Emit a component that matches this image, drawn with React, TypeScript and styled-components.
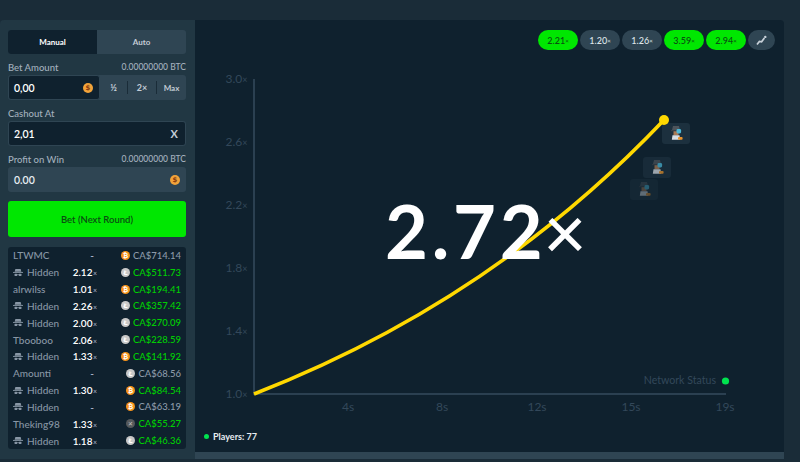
import React from "react";
import styled, { createGlobalStyle } from "styled-components";

const Global = createGlobalStyle`
  html, body { margin: 0; padding: 0; background: #1a2c38; }
  body { font-family: "Lato", "Noto Sans", sans-serif; overflow: hidden; }
  * { box-sizing: border-box; }
`;

const Page = styled.div`
  width: 800px;
  height: 462px;
  padding-top: 20px;
  background: #1a2c38;
`;
const Frame = styled.div`
  width: 784px;
  height: 439px;
  display: flex;
  border-radius: 4px 4px 0 0;
  overflow: hidden;
`;
const Sidebar = styled.aside`
  width: 195px;
  flex: none;
  background: #213743;
  padding: 10px 9px 0 8px;
  display: flex;
  flex-direction: column;
`;
const Tabs = styled.div`
  display: flex;
  height: 24px;
  background: #2f4553;
  border-radius: 3px;
  overflow: hidden;
`;
const Tab = styled.div<{ $active?: boolean }>`
  flex: 1;
  display: flex;
  align-items: center;
  justify-content: center;
  font-size: 8px;
  font-weight: 700;
  color: ${(p) => (p.$active ? "#ffffff" : "#c3ccd6")};
  background: ${(p) => (p.$active ? "#0f212e" : "transparent")};
`;
const LabelRow = styled.div<{ $top: number }>`
  display: flex;
  justify-content: space-between;
  align-items: center;
  height: 12px;
  margin-top: ${(p) => p.$top}px;
  margin-bottom: 2px;
  font-size: 9.5px;
  font-weight: 500;
  color: #a3b0bd;
`;
const Balance = styled.span`
  font-size: 8.5px;
`;
const Combo = styled.div`
  display: flex;
  height: 25px;
  background: #2f4553;
  border-radius: 3px;
  overflow: hidden;
`;
const Field = styled.div<{ $grow?: boolean }>`
  ${(p) => (p.$grow ? "flex: 1;" : "width: 92px;")}
  height: 100%;
  display: flex;
  align-items: center;
  justify-content: space-between;
  padding: 0 6px 0 5px;
  background: #0f212e;
  border: 1px solid #2f4553;
  border-radius: 3px;
  font-size: 10.5px;
  font-weight: 600;
  color: #ffffff;
`;
const Quick = styled.div`
  flex: 1;
  display: flex;
  align-items: center;
  padding: 0;
`;
const QuickBtn = styled.div<{ $w: number; $sep?: boolean; $small?: boolean }>`
  width: ${(p) => p.$w}px;
  height: 13px;
  display: flex;
  align-items: center;
  justify-content: center;
  font-size: ${(p) => (p.$small ? 8 : 9)}px;
  font-weight: 700;
  color: #c3ccd6;
  ${(p) => (p.$sep ? "border-left: 1px solid #1a2c38;" : "")}
`;
const XMark = styled.span`
  font-size: 11px;
  font-weight: 700;
  color: #c3ccd6;
  margin-right: 1px;
`;
const ReadOnly = styled.div`
  height: 25px;
  display: flex;
  align-items: center;
  justify-content: space-between;
  padding: 0 6px;
  background: #2f4553;
  border-radius: 3px;
  font-size: 10.5px;
  font-weight: 600;
  color: #e8edf2;
`;
const BetButton = styled.div`
  height: 36px;
  margin-top: 9px;
  display: flex;
  align-items: center;
  justify-content: center;
  background: #00e701;
  border-radius: 3px;
  font-size: 9.5px;
  font-weight: 600;
  color: #0b4d12;
`;
const List = styled.div`
  height: 202px;
  margin-top: 10px;
  padding: 0 5px;
  display: grid;
  grid-auto-rows: 1fr;
  background: #0f212e;
  border-radius: 3px;
`;
const Row = styled.div`
  display: grid;
  grid-template-columns: 84px 1fr;
  align-items: center;
  font-size: 10px;
  font-weight: 500;
  color: #8896a5;
`;
const NameMult = styled.div`
  display: flex;
  align-items: center;
  justify-content: space-between;
`;
const Name = styled.span`
  display: flex;
  align-items: center;
  gap: 4px;
  font-size: 10px;
`;
const Mult = styled.span<{ $dash?: boolean }>`
  color: #ffffff;
  font-weight: 600;
  font-size: 10px;
  ${(p) => (p.$dash ? "margin-right: 3px; color:#b1bad3;" : "")}
`;
const Times = styled.span`
  font-size: 7px;
  font-weight: 400;
  color: #b1bad3;
  margin-left: 0.5px;
`;
const Amount = styled.div<{ $win?: boolean }>`
  display: flex;
  align-items: center;
  justify-content: flex-end;
  gap: 3px;
  font-size: 9.5px;
  color: ${(p) => (p.$win ? "#00cf02" : "#8c9aa9")};
`;
const Main = styled.main`
  flex: 1;
  display: flex;
  flex-direction: column;
  background: #0f212e;
`;
const History = styled.div`
  height: 40px;
  flex: none;
  padding: 10px 9px 0 0;
  display: flex;
  justify-content: flex-end;
  gap: 2px;
`;
const Pill = styled.div<{ $win?: boolean; $icon?: boolean }>`
  width: ${(p) => (p.$icon ? 27 : 40)}px;
  height: 20px;
  display: flex;
  align-items: center;
  justify-content: center;
  border-radius: 10px;
  font-size: 9px;
  font-weight: 500;
  background: ${(p) => (p.$win ? "#00e701" : "#2f4553")};
  color: ${(p) => (p.$win ? "#0b4d12" : "#dfe5ea")};
`;
const PillTimes = styled.span`
  font-size: 6px;
`;
const Chart = styled.div`
  flex: 1;
  position: relative;
`;
const ChartSvg = styled.svg`
  display: block;
  width: 588px;
  height: 365px;
`;
const Multiplier = styled.div`
  position: absolute;
  left: 190px;
  top: 128px;
  display: flex;
  align-items: baseline;
  font-size: 74px;
  line-height: 86px;
  font-weight: 700;
  letter-spacing: 3.8px;
  color: #ffffff;
`;
const MultX = styled.span`
  font-size: 74px;
  letter-spacing: 0;
  margin-left: -3px;
  font-weight: 500;
`;
const Footer = styled.div`
  height: 27px;
  flex: none;
  display: flex;
  align-items: center;
  gap: 4px;
  padding: 0 0 4px 9px;
  font-size: 9px;
  font-weight: 700;
  color: #e8edf2;
`;
const Dot = styled.span`
  width: 5px;
  height: 5px;
  border-radius: 50%;
  background: #00e34f;
`;
const BottomStrip = styled.div`
  height: 7px;
  margin-top: auto;
  background: #2f4553;
`;
const MainWrap = styled.div`
  flex: 1;
  display: flex;
  flex-direction: column;
`;

type CoinKind = "btc" | "ltc" | "xrp" | "usd";
const coinFill: Record<CoinKind, string> = { btc: "#f7931a", ltc: "#c8c8c8", xrp: "#55595c", usd: "#f2a33a" };
const coinMark: Record<CoinKind, string> = { btc: "₿", ltc: "Ł", xrp: "✕", usd: "$" };
const Coin = ({ kind, size = 9 }: { kind: CoinKind; size?: number }) => (
  <svg width={size} height={size} viewBox="0 0 10 10" style={{ flex: "none" }}>
    <circle cx="5" cy="5" r="5" fill={coinFill[kind]} />
    <text
      x="5"
      y="7.4"
      textAnchor="middle"
      fontSize="7"
      fontWeight="700"
      fontFamily="'DejaVu Sans', sans-serif"
      fill={kind === "usd" ? "#8a3d10" : kind === "xrp" ? "#bbbbbb" : "#ffffff"}
    >
      {coinMark[kind]}
    </text>
  </svg>
);

const Incognito = () => (
  <svg width="10" height="9" viewBox="0 0 11 9" style={{ flex: "none" }}>
    <path d="M2.6 0.6h5.8l0.8 3H1.8z" fill="#8896a5" />
    <rect x="0" y="3.9" width="11" height="1" fill="#8896a5" />
    <rect x="1.6" y="6" width="3.2" height="2.4" rx="0.8" fill="#8896a5" />
    <rect x="6.2" y="6" width="3.2" height="2.4" rx="0.8" fill="#8896a5" />
    <rect x="4.6" y="6.5" width="1.8" height="0.7" fill="#8896a5" />
  </svg>
);

const rows: { name: string; hidden?: boolean; mult: string; coin: CoinKind; amount: string; win: boolean }[] = [
  { name: "LTWMC", mult: "-", coin: "btc", amount: "CA$714.14", win: false },
  { name: "Hidden", hidden: true, mult: "2.12", coin: "ltc", amount: "CA$511.73", win: true },
  { name: "alrwilss", mult: "1.01", coin: "btc", amount: "CA$194.41", win: true },
  { name: "Hidden", hidden: true, mult: "2.26", coin: "ltc", amount: "CA$357.42", win: true },
  { name: "Hidden", hidden: true, mult: "2.00", coin: "ltc", amount: "CA$270.09", win: true },
  { name: "Tbooboo", mult: "2.06", coin: "ltc", amount: "CA$228.59", win: true },
  { name: "Hidden", hidden: true, mult: "1.33", coin: "btc", amount: "CA$141.92", win: true },
  { name: "Amounti", mult: "-", coin: "ltc", amount: "CA$68.56", win: false },
  { name: "Hidden", hidden: true, mult: "1.30", coin: "btc", amount: "CA$84.54", win: true },
  { name: "Hidden", hidden: true, mult: "-", coin: "btc", amount: "CA$63.19", win: false },
  { name: "Theking98", mult: "1.33", coin: "xrp", amount: "CA$55.27", win: true },
  { name: "Hidden", hidden: true, mult: "1.18", coin: "ltc", amount: "CA$46.36", win: true },
];

const pills = [
  { v: "2.21", win: true },
  { v: "1.20", win: false },
  { v: "1.26", win: false },
  { v: "3.59", win: true },
  { v: "2.94", win: true },
];

const yTicks = [
  { l: "3.0", y: 79 },
  { l: "2.6", y: 142 },
  { l: "2.2", y: 205 },
  { l: "1.8", y: 268 },
  { l: "1.4", y: 331 },
  { l: "1.0", y: 394 },
];
const xTicks = [
  { l: "4s", x: 348 },
  { l: "8s", x: 442 },
  { l: "12s", x: 537 },
  { l: "15s", x: 631 },
  { l: "19s", x: 725 },
];

const PlayerTile = ({ x, y, o }: { x: number; y: number; o: number }) => (
  <g transform={`translate(${x} ${y})`} opacity={o}>
    <rect width="28" height="21" rx="3" fill="#1c303e" />
    <g transform="translate(9 3)">
      <path d="M2 0h6l1 4H1z" fill="#4d545b" />
      <rect x="0" y="4" width="10" height="1.2" fill="#3a4047" />
      <path d="M2.5 5.2h5v4h-5z" fill="#a97a55" />
      <path d="M1.5 9.2h7l0.7 4.6H0.8z" fill="#d9dee3" />
      <rect x="5.5" y="3" width="4.6" height="4.4" rx="1.4" fill="#4bb8d8" />
      <rect x="7" y="11" width="4.6" height="2.8" rx="1" fill="#e8932c" />
    </g>
  </g>
);

const tickColor = "#33485a";

export default function App() {
  return (
    <Page>
      <Global />
      <Frame>
        <Sidebar>
          <Tabs>
            <Tab $active>Manual</Tab>
            <Tab>Auto</Tab>
          </Tabs>
          <LabelRow $top={7}>
            <span>Bet Amount</span>
            <Balance>0.00000000 BTC</Balance>
          </LabelRow>
          <Combo>
            <Field>
              0,00
              <Coin kind="usd" size={10} />
            </Field>
            <Quick>
              <QuickBtn $w={27}>½</QuickBtn>
              <QuickBtn $w={29} $sep>
                2×
              </QuickBtn>
              <QuickBtn $w={30} $sep $small>
                Max
              </QuickBtn>
            </Quick>
          </Combo>
          <LabelRow $top={7}>
            <span>Cashout At</span>
          </LabelRow>
          <Combo>
            <Field $grow>
              2,01
              <XMark>X</XMark>
            </Field>
          </Combo>
          <LabelRow $top={7}>
            <span>Profit on Win</span>
            <Balance>0.00000000 BTC</Balance>
          </LabelRow>
          <ReadOnly>
            0.00
            <Coin kind="usd" size={10} />
          </ReadOnly>
          <BetButton>Bet (Next Round)</BetButton>
          <List>
            {rows.map((r, i) => (
              <Row key={i}>
                <NameMult>
                  <Name>
                    {r.hidden && <Incognito />}
                    {r.name}
                  </Name>
                  {r.mult === "-" ? (
                    <Mult $dash>-</Mult>
                  ) : (
                    <Mult>
                      {r.mult}
                      <Times>×</Times>
                    </Mult>
                  )}
                </NameMult>
                <Amount $win={r.win}>
                  <Coin kind={r.coin} />
                  {r.amount}
                </Amount>
              </Row>
            ))}
          </List>
        </Sidebar>
        <MainWrap>
          <Main>
            <History>
              {pills.map((p, i) => (
                <Pill key={i} $win={p.win}>
                  {p.v}
                  <PillTimes>×</PillTimes>
                </Pill>
              ))}
              <Pill $icon>
                <svg width="11" height="11" viewBox="0 0 11 11">
                  <path d="M1 9.5 L3.4 6.4 L5.6 6.8 L8.4 3" fill="none" stroke="#c9d1d9" strokeWidth="1.7" />
                  <circle cx="9.3" cy="1.9" r="1.2" fill="#c9d1d9" />
                </svg>
              </Pill>
            </History>
            <Chart>
              <ChartSvg viewBox="195 60 588 365" fontFamily="Lato, 'Noto Sans', sans-serif">
                <path d="M254 79V394H726" fill="none" stroke="#2b4051" strokeWidth="2" />
                {yTicks.map((t) => (
                  <text key={t.l} x="247.5" y={t.y + 4} textAnchor="end" fontSize="12" fill={tickColor}>
                    {t.l}
                    <tspan fontSize="9">×</tspan>
                  </text>
                ))}
                {xTicks.map((t) => (
                  <text key={t.l} x={t.x} y="411" textAnchor="middle" fontSize="12" fill={tickColor}>
                    {t.l}
                  </text>
                ))}
                <PlayerTile x={662} y={123} o={1} />
                <PlayerTile x={643} y={157} o={0.7} />
                <PlayerTile x={630} y={179} o={0.4} />
                <path d="M254 394Q491 302 664 120" fill="none" stroke="#ffd800" strokeWidth="3.6" />
                <circle cx="664" cy="120" r="5" fill="#ffd800" />
                <text x="716" y="384" textAnchor="end" fontSize="10.6" fill={tickColor}>
                  Network Status
                </text>
                <circle cx="725.5" cy="381" r="3.6" fill="#00e34f" />
              </ChartSvg>
              <Multiplier>
                2.72
                <MultX>×</MultX>
              </Multiplier>
            </Chart>
            <Footer>
              <Dot />
              Players: 77
            </Footer>
          </Main>
          <BottomStrip />
        </MainWrap>
      </Frame>
    </Page>
  );
}
